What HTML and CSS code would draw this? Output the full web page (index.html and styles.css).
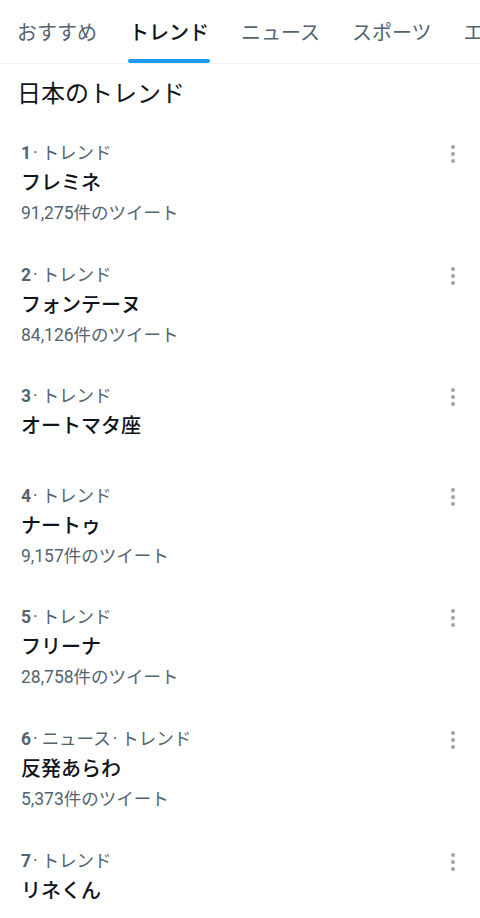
FILE: index.html
```html
<!DOCTYPE html>
<html lang="ja">
<head>
  <meta charset="UTF-8">
  <title>トレンド</title>
  <link rel="stylesheet" href="styles.css">
</head>
<body>

<nav class="tabs">
  <div class="tab">おすすめ</div>
  <div class="tab active">トレンド</div>
  <div class="tab">ニュース</div>
  <div class="tab">スポーツ</div>
  <div class="tab">エンタメ</div>
</nav>

<h2 class="section-title">日本のトレンド</h2>

<ul class="trends">
  <li class="trend">
    <div class="meta"><b>1</b><span class="dot">·</span>トレンド</div>
    <div class="name">フレミネ</div>
    <div class="count">91,275件のツイート</div>
    <span class="more"><i></i><i></i><i></i></span>
  </li>
  <li class="trend">
    <div class="meta"><b>2</b><span class="dot">·</span>トレンド</div>
    <div class="name">フォンテーヌ</div>
    <div class="count">84,126件のツイート</div>
    <span class="more"><i></i><i></i><i></i></span>
  </li>
  <li class="trend">
    <div class="meta"><b>3</b><span class="dot">·</span>トレンド</div>
    <div class="name">オートマタ座</div>
    <span class="more"><i></i><i></i><i></i></span>
  </li>
  <li class="trend">
    <div class="meta"><b>4</b><span class="dot">·</span>トレンド</div>
    <div class="name">ナートゥ</div>
    <div class="count">9,157件のツイート</div>
    <span class="more"><i></i><i></i><i></i></span>
  </li>
  <li class="trend">
    <div class="meta"><b>5</b><span class="dot">·</span>トレンド</div>
    <div class="name">フリーナ</div>
    <div class="count">28,758件のツイート</div>
    <span class="more"><i></i><i></i><i></i></span>
  </li>
  <li class="trend">
    <div class="meta"><b>6</b><span class="dot">·</span>ニュース<span class="dot">·</span>トレンド</div>
    <div class="name">反発あらわ</div>
    <div class="count">5,373件のツイート</div>
    <span class="more"><i></i><i></i><i></i></span>
  </li>
  <li class="trend">
    <div class="meta"><b>7</b><span class="dot">·</span>トレンド</div>
    <div class="name">リネくん</div>
    <span class="more"><i></i><i></i><i></i></span>
  </li>
</ul>

</body>
</html>
```

FILE: styles.css
```css
body {
  margin: 0;
  background-color: #fff;
  color: #0f1419;
  font-family: Roboto, "Noto Sans CJK JP", sans-serif;
  overflow: hidden;
}

.tabs {
  display: flex;
  gap: 32px;
  height: 63px;
  padding-left: 17px;
  border-bottom: 1px solid #eff3f4;
  white-space: nowrap;
  overflow: hidden;
}

.tab {
  position: relative;
  flex: none;
  font-size: 20px;
  line-height: 66px;
  color: #536471;
}

.tab.active {
  color: #0f1419;
  font-weight: 500;
}

.tab.active::after {
  content: "";
  position: absolute;
  left: -1px;
  right: -1px;
  bottom: 0;
  height: 4px;
  border-radius: 2px;
  background-color: #1d9bf0;
}

.section-title {
  margin: 0;
  padding: 12px 17px 10px;
  font-size: 24px;
  font-weight: 400;
  line-height: 36px;
}

.trends {
  list-style: none;
  margin: 0;
  padding: 0;
}

.trend {
  position: relative;
  padding: 19px 21px 19.6px;
}

.meta {
  font-size: 17.5px;
  line-height: 24px;
  color: #536471;
}

.meta b {
  font-weight: 700;
}

.dot {
  margin: 0 4px 0 2px;
}

.name {
  font-size: 20px;
  line-height: 37px;
  font-weight: 500;
}

.count {
  font-size: 17.5px;
  line-height: 22px;
  color: #536471;
}

.more {
  position: absolute;
  top: 23px;
  right: 25px;
  display: flex;
  flex-direction: column;
  gap: 3px;
}

.more i {
  width: 4px;
  height: 4px;
  border-radius: 50%;
  background-color: #9aa4ad;
}
```
